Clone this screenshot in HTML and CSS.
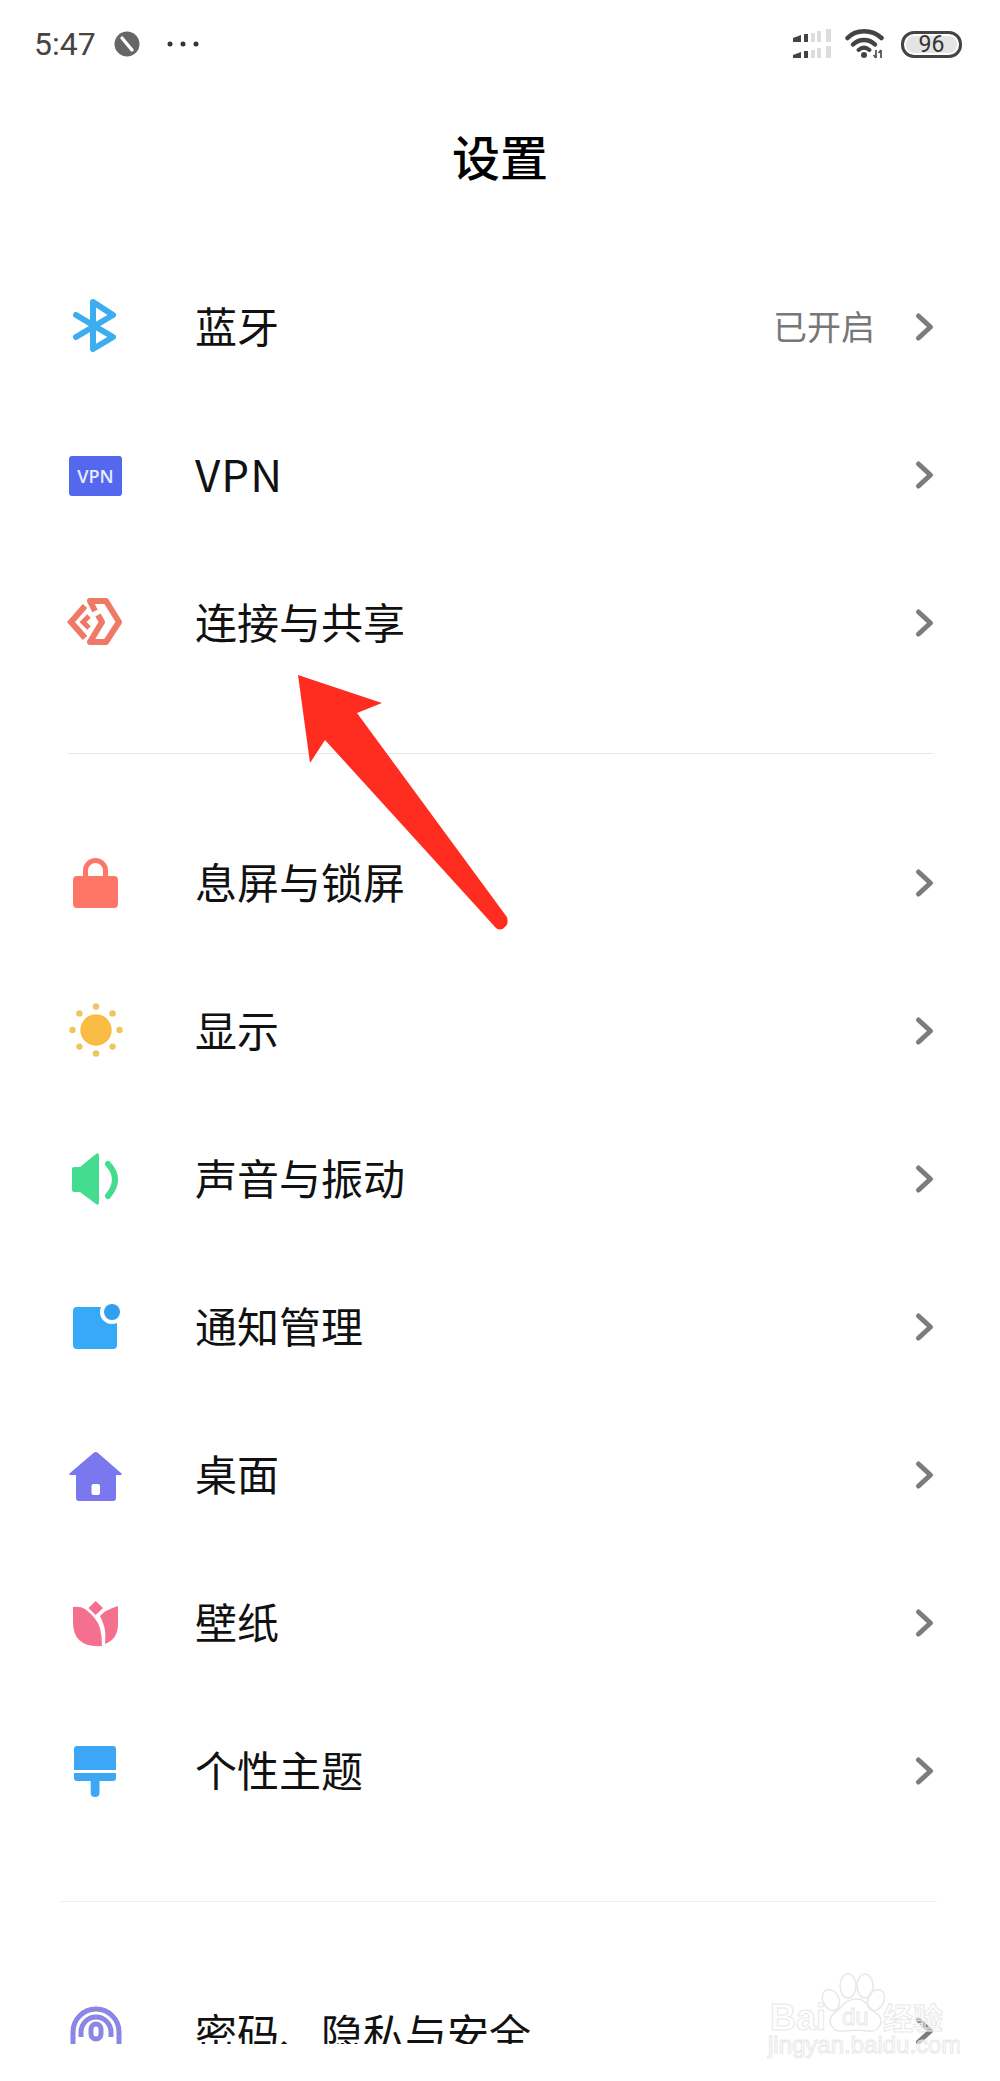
FILE: index.html
```html
<!DOCTYPE html>
<html lang="zh-CN">
<head>
    <meta charset="UTF-8">
    <meta name="viewport" content="width=device-width, initial-scale=1.0">
    <title>设置</title>
    <link rel="stylesheet" href="styles.css">
</head>
<body>
    <svg class="defs" width="0" height="0">
        <symbol id="chev" viewBox="0 0 22 34">
            <path d="M5.500 5 L17.500 16 L5.500 27" fill="none" stroke="#7c7c7c" stroke-width="5" stroke-linecap="round" stroke-linejoin="round"/>
        </symbol>
    </svg>

    <div class="page">
        <!-- Status bar -->
        <div class="status">
            <span class="time">5:47</span>
            <svg class="dnd" width="26" height="26" viewBox="0 0 26 26">
                <circle cx="13" cy="13" r="12.500" fill="#666"/>
                <path d="M8 7 L18 19" stroke="#fff" stroke-width="3.400" stroke-linecap="round"/>
            </svg>
            <svg class="more" width="32" height="6" viewBox="0 0 32 6">
                <circle cx="3" cy="3" r="2.500" fill="#333"/>
                <circle cx="16" cy="3" r="2.500" fill="#333"/>
                <circle cx="29" cy="3" r="2.500" fill="#333"/>
            </svg>
            <div class="status-right">
                <svg class="signal" width="38" height="30" viewBox="0 0 38 30">
                    <path d="M0 9 L8 6 V13 H0 Z M11 5 H15 V13 H11 Z" fill="#444"/>
                    <path d="M18 4 H22 V13 H18 Z M24 2 H28 V13 H24 Z M33 0 H38 V13 H33 Z" fill="#ddd"/>
                    <path d="M0 26 L8 23 V29 H0 Z M11 22 H15 V29 H11 Z" fill="#444"/>
                    <path d="M18 21 H22 V29 H18 Z M24 19 H28 V29 H24 Z M33 17 H38 V29 H33 Z" fill="#ddd"/>
                </svg>
                <svg class="wifi" width="40" height="30" viewBox="0 0 40 30">
                    <path d="M2.500 9 C11 0 27 0 36.500 9" fill="none" stroke="#444" stroke-width="4.500" stroke-linecap="round"/>
                    <path d="M8 15.500 C14 9.500 24 9.500 30 15.500" fill="none" stroke="#444" stroke-width="4.500" stroke-linecap="round"/>
                    <path d="M13.500 21 C17 18 21 18 24.500 21" fill="none" stroke="#444" stroke-width="4" stroke-linecap="round"/>
                    <circle cx="19" cy="26" r="3" fill="#444"/>
                    <path d="M31 21 V29 M36 21 V29 M28.500 26 L31 29 M33.500 24 L36 21" fill="none" stroke="#555" stroke-width="1.800"/>
                </svg>
                <div class="battery"><span>96</span></div>
            </div>
        </div>

        <h1 class="title">设置</h1>

        <!-- First group -->
        <div class="group">
            <div class="row">
                <svg class="icon" viewBox="0 0 56 56">
                    <path d="M9 15 L46 37 L26 49 V2 L46 15 L9 37" fill="none" stroke="#3caef0" stroke-width="6" stroke-linecap="round" stroke-linejoin="round"/>
                </svg>
                <span class="label">蓝牙</span>
                <span class="value">已开启</span>
                <svg class="chevron"><use href="#chev"/></svg>
            </div>
            <div class="row">
                <div class="icon icon-vpn">VPN</div>
                <span class="label label-latin">VPN</span>
                <svg class="chevron"><use href="#chev"/></svg>
            </div>
            <div class="row">
                <svg class="icon" viewBox="0 0 56 56">
                    <path d="M28 15 L23 5 H39 L52 26 L39 46 H23 L35 26 L31 19" fill="none" stroke="#ee7a66" stroke-width="6" stroke-linejoin="round"/>
                    <path d="M18 10 L4 26 L18 42" fill="none" stroke="#ee7a66" stroke-width="6"/>
                    <path d="M22 20 L16 26 L22 32" fill="none" stroke="#ee7a66" stroke-width="5"/>
                </svg>
                <span class="label">连接与共享</span>
                <svg class="chevron"><use href="#chev"/></svg>
            </div>
        </div>

        <div class="divider"></div>

        <!-- Second group -->
        <div class="group">
            <div class="row">
                <svg class="icon" viewBox="0 0 56 56">
                    <path d="M18.500 21 V14.500 A10 10 0 0 1 38.500 14.500 V21" fill="none" stroke="#ff7566" stroke-width="5"/>
                    <rect x="6" y="20" width="45" height="32" rx="4" fill="#ff7566"/>
                </svg>
                <span class="label">息屏与锁屏</span>
                <svg class="chevron"><use href="#chev"/></svg>
            </div>
            <div class="row">
                <svg class="icon" viewBox="0 0 56 56">
                    <circle cx="29" cy="26" r="15.700" fill="#fbbc44"/>
                    <g fill="#eec660">
                        <circle cx="29" cy="2.500" r="3.200"/>
                        <circle cx="45.600" cy="9.400" r="3.200"/>
                        <circle cx="52.500" cy="26" r="3.200"/>
                        <circle cx="45.600" cy="42.600" r="3.200"/>
                        <circle cx="29" cy="49.500" r="3.200"/>
                        <circle cx="12.400" cy="42.600" r="3.200"/>
                        <circle cx="5.500" cy="26" r="3.200"/>
                        <circle cx="12.400" cy="9.400" r="3.200"/>
                    </g>
                </svg>
                <span class="label">显示</span>
                <svg class="chevron"><use href="#chev"/></svg>
            </div>
            <div class="row">
                <svg class="icon" viewBox="0 0 56 56">
                    <path d="M5 17 Q5 15 7 15 H13 L29 2 Q32 0 32 4 V50 Q32 54 29 52 L13 40 H7 Q5 40 5 38 Z" fill="#44dc8e"/>
                    <path d="M41 12 Q55 27 41 44" fill="none" stroke="#44dc8e" stroke-width="6" stroke-linecap="round"/>
                </svg>
                <span class="label">声音与振动</span>
                <svg class="chevron"><use href="#chev"/></svg>
            </div>
            <div class="row">
                <svg class="icon" viewBox="0 0 56 56">
                    <rect x="6" y="7" width="44" height="42" rx="4" fill="#36aaf8"/>
                    <circle cx="45" cy="12" r="12" fill="#fff"/>
                    <circle cx="45" cy="12" r="8" fill="#2f9fee"/>
                </svg>
                <span class="label">通知管理</span>
                <svg class="chevron"><use href="#chev"/></svg>
            </div>
            <div class="row">
                <svg class="icon" viewBox="0 0 56 56">
                    <path d="M26.500 5 Q28.700 3 31 5 L54 25 Q56 27 53 27 H49 V50 Q49 53 46 53 H12 Q9 53 9 50 V27 H4 Q1 27 3 25 Z" fill="#7b77ee"/>
                    <rect x="24.500" y="36" width="8.500" height="11" rx="2" fill="#fff"/>
                </svg>
                <span class="label">桌面</span>
                <svg class="chevron"><use href="#chev"/></svg>
            </div>
            <div class="row">
                <svg class="icon" viewBox="0 0 56 56">
                    <path d="M28.700 5 L36 12 L28.700 19 L21.500 12 Z" fill="#f5708e"/>
                    <path d="M6 11 Q13 10 18 13 Q30 22 33 32 Q35 40 35 50 Q6 52 6 26 Z" fill="#f5708e"/>
                    <path d="M51 10 V28 Q51 43 38 48 Q39 36 37 30 Q35 24 33 20 Q38 14 51 10 Z" fill="#f5708e"/>
                </svg>
                <span class="label">壁纸</span>
                <svg class="chevron"><use href="#chev"/></svg>
            </div>
            <div class="row">
                <svg class="icon" viewBox="0 0 56 56">
                    <path d="M10 2 H46 Q49 2 49 5 V26 H7 V5 Q7 2 10 2 Z" fill="#3ea7f5"/>
                    <path d="M7 29 H49 V34 Q49 37 46 37 H32.500 V49 Q32.500 53 28 53 Q23.700 53 23.700 49 V37 H10 Q7 37 7 34 Z" fill="#3ea7f5"/>
                </svg>
                <span class="label">个性主题</span>
                <svg class="chevron"><use href="#chev"/></svg>
            </div>
        </div>

        <div class="divider divider-wide"></div>

        <!-- Third group, cut off by the bottom of the screen -->
        <div class="group">
            <div class="row">
                <svg class="icon" viewBox="0 0 56 56">
                    <g fill="none" stroke="#8a86e6" stroke-width="5">
                        <path d="M6 44 V28 A23 23 0 0 1 52 28 V44"/>
                        <path d="M14 33 V28 A15 15 0 0 1 44 28 V33"/>
                        <rect x="24" y="20" width="10" height="15" rx="5"/>
                    </g>
                </svg>
                <span class="label label-cut">密码、隐私与安全</span>
                <svg class="chevron"><use href="#chev"/></svg>
            </div>
        </div>

        <!-- Red arrow drawn on top of the screenshot -->
        <svg class="arrow" width="230" height="275" viewBox="0 0 230 275">
            <path d="M8 10 L92 38 L67 48 L216.700 251.700 Q219 258 216 261 Q211 267 206 263 Q204 261 203.300 260 L35 75 L20 98 Z" fill="#ff2d20"/>
        </svg>
    </div>

    <!-- Site watermark -->
    <svg class="watermark" width="210" height="105" viewBox="0 0 210 105">
        <g fill="none" stroke="#e8e8e8" stroke-width="1.500">
            <ellipse cx="81" cy="35" rx="8" ry="11" transform="rotate(-25 81 35)"/>
            <ellipse cx="98" cy="21" rx="8" ry="12"/>
            <ellipse cx="115" cy="21" rx="8" ry="12"/>
            <ellipse cx="126" cy="35" rx="8" ry="11" transform="rotate(25 126 35)"/>
            <path d="M106 34 C118 34 118 44 126 48 C136 54 130 68 118 66 C110 65 102 65 94 66 C82 68 76 56 84 48 C92 44 94 34 106 34 Z"/>
        </g>
        <g class="wm-text">
            <text x="20" y="65" class="wm-big">Bai</text>
            <text x="92" y="60" class="wm-du">du</text>
            <text x="133" y="64" class="wm-cn">经验</text>
            <text x="18" y="88" class="wm-url">jingyan.baidu.com</text>
        </g>
    </svg>
</body>
</html>
```

FILE: styles.css
```css
html, body {
    margin: 0;
    padding: 0;
    height: 2081px;
    background-color: #fff;
    overflow: hidden;
}
body {
    position: relative;
    font-family: "Noto Sans CJK SC", "Noto Sans", sans-serif;
    color: #111;
}
.defs {
    position: absolute;
}
.page {
    position: relative;
    height: 2044px;
    overflow: hidden;
}

/* status bar */
.status {
    display: flex;
    align-items: center;
    height: 88px;
    padding: 0 38px 0 34px;
}
.time {
    font-family: Roboto, sans-serif;
    font-size: 32px;
    color: #444;
}
.dnd {
    margin-left: 18px;
}
.more {
    margin-left: 27px;
}
.status-right {
    display: flex;
    align-items: center;
    margin-left: auto;
}
.wifi {
    margin-left: 14px;
}
.battery {
    display: flex;
    align-items: center;
    justify-content: center;
    box-sizing: border-box;
    width: 61px;
    height: 27px;
    margin-left: 16px;
    border: 3px solid #444;
    border-radius: 13px;
    background-color: #e4e4e4;
    box-shadow: inset 0 0 0 2px #fff;
    font-family: Roboto, sans-serif;
    font-size: 23px;
    color: #333;
}

.title {
    height: 134px;
    margin: 0 0 32px;
    font-size: 48px;
    font-weight: 500;
    line-height: 134px;
    text-align: center;
    color: #000;
}

/* rows */
.row {
    display: flex;
    align-items: center;
    height: 148px;
    padding: 0 65px 0 67px;
}
.icon {
    flex: none;
    width: 56px;
    height: 56px;
    overflow: visible;
}
.icon-vpn {
    display: flex;
    align-items: center;
    justify-content: center;
    width: 53px;
    height: 40px;
    margin: 0 1px 0 2px;
    background-color: #5468ee;
    border-radius: 3px;
    font-family: "Open Sans", sans-serif;
    font-size: 18px;
    font-weight: 600;
    color: #e8ecff;
}
.label {
    margin-left: 72px;
    padding-bottom: 6px;
    font-size: 42px;
    line-height: 60px;
}
.label-latin {
    font-size: 44px;
    letter-spacing: 1px;
}
.label-cut {
    padding-bottom: 0;
}
.value {
    margin-left: auto;
    margin-right: 38px;
    padding-bottom: 6px;
    font-size: 34px;
    color: #777;
}
.chevron {
    flex: none;
    width: 22px;
    height: 34px;
    margin-left: auto;
}
.value + .chevron {
    margin-left: 0;
}

.divider {
    height: 1px;
    margin: 55px 67px 56px 68px;
    background-color: #e8e8e8;
}
.divider-wide {
    margin-left: 59px;
    margin-right: 63px;
    background-color: #f0f0f0;
}

/* overlays */
.arrow {
    position: absolute;
    left: 290px;
    top: 665px;
}
.watermark {
    position: absolute;
    left: 750px;
    top: 1965px;
}
.wm-text text {
    fill: rgba(255, 255, 255, 0.4);
    stroke: #e8e8e8;
    stroke-width: 1;
}
.wm-big {
    font-family: "Liberation Sans", sans-serif;
    font-size: 36px;
    font-weight: 700;
}
.wm-du {
    font-family: "Liberation Sans", sans-serif;
    font-size: 24px;
}
.wm-cn {
    font-family: "Noto Sans CJK SC", sans-serif;
    font-size: 30px;
    font-weight: 700;
}
.wm-url {
    font-family: "Liberation Sans", sans-serif;
    font-size: 24px;
}
```
